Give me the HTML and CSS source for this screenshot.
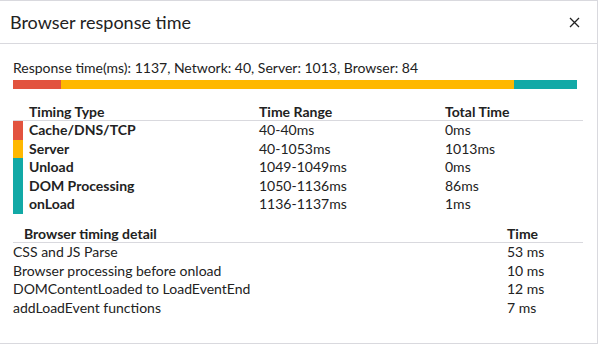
FILE: index.html
```html
<!DOCTYPE html>
<html>
<head>
<meta charset="utf-8">
<link rel="stylesheet" href="styles.css">
</head>
<body>
<div class="dialog">
  <div class="header">
    <div class="title">Browser response time</div>
    <button class="close" aria-label="Close">
      <svg width="11" height="11" viewBox="0 0 11 11"><path d="M1 1 L10 10 M10 1 L1 10" stroke="#222" stroke-width="1.3" fill="none"/></svg>
    </button>
  </div>
  <div class="body">
    <div class="summary">Response time(ms): 1137, Network: 40, Server: 1013, Browser: 84</div>
    <div class="bar">
      <div class="seg red" style="width:48px"></div>
      <div class="seg yellow" style="width:453px"></div>
      <div class="seg teal" style="width:63px"></div>
    </div>

    <div class="timing">
      <div class="trow thead">
        <div class="swatch"></div>
        <div class="c1">Timing Type</div>
        <div class="c2">Time Range</div>
        <div class="c3">Total Time</div>
      </div>
      <div class="trow">
        <div class="swatch red"></div>
        <div class="c1 b">Cache/DNS/TCP</div>
        <div class="c2">40-40ms</div>
        <div class="c3">0ms</div>
      </div>
      <div class="trow">
        <div class="swatch yellow"></div>
        <div class="c1 b">Server</div>
        <div class="c2">40-1053ms</div>
        <div class="c3">1013ms</div>
      </div>
      <div class="trow">
        <div class="swatch teal"></div>
        <div class="c1 b">Unload</div>
        <div class="c2">1049-1049ms</div>
        <div class="c3">0ms</div>
      </div>
      <div class="trow">
        <div class="swatch teal"></div>
        <div class="c1 b">DOM Processing</div>
        <div class="c2">1050-1136ms</div>
        <div class="c3">86ms</div>
      </div>
      <div class="trow">
        <div class="swatch teal"></div>
        <div class="c1 b">onLoad</div>
        <div class="c2">1136-1137ms</div>
        <div class="c3">1ms</div>
      </div>
    </div>

    <div class="detail">
      <div class="drow dhead">
        <div class="d1">Browser timing detail</div>
        <div class="d2">Time</div>
      </div>
      <div class="drow">
        <div class="d1">CSS and JS Parse</div>
        <div class="d2">53 ms</div>
      </div>
      <div class="drow">
        <div class="d1">Browser processing before onload</div>
        <div class="d2">10 ms</div>
      </div>
      <div class="drow">
        <div class="d1">DOMContentLoaded to LoadEventEnd</div>
        <div class="d2">12 ms</div>
      </div>
      <div class="drow">
        <div class="d1">addLoadEvent functions</div>
        <div class="d2">7 ms</div>
      </div>
    </div>
  </div>
</div>
</body>
</html>
```

FILE: styles.css
```css
html, body {
  margin: 0;
  padding: 0;
  background: #fff;
}
body {
  font-family: Lato, "Open Sans", sans-serif;
  color: #222;
  font-size: 14px;
}
.dialog {
  box-sizing: border-box;
  width: 598px;
  height: 344px;
  border-top: 1px solid #d9d9de;
  border-right: 1px solid #d9d9de;
  border-bottom: 1px solid #d9d9de;
  background: #fff;
}
.header {
  box-sizing: border-box;
  height: 43px;
  border-bottom: 1px solid #d9d9de;
  display: flex;
  align-items: center;
  justify-content: space-between;
  padding: 0 17px 0 10px;
}
.title {
  font-size: 18px;
  color: #222;
  padding-bottom: 1px;
}
.close {
  border: 0;
  background: none;
  padding: 0;
  width: 11px;
  height: 11px;
  display: flex;
}
.body {
  padding: 16px 14px 0 13px;
}
.summary {
  line-height: 16px;
  height: 16px;
}
.bar {
  display: flex;
  height: 9px;
  margin-top: 4px;
  width: 564px;
}
.seg { height: 100%; }
.red { background: #e2533f; }
.yellow { background: #ffb800; }
.teal { background: #12a9a6; }

.timing {
  margin-top: 14px;
  width: 570px;
}
.trow {
  display: grid;
  grid-template-columns: 10px 236px 186px 1fr;
  height: 18.6px;
  line-height: 18.6px;
}
.trow > div:not(.swatch) {
  padding-left: 6px;
}
.trow.thead {
  height: 17px;
  line-height: 17px;
  font-weight: 700;
  border-bottom: 1px solid #d9d9de;
}
.thead .c1 { padding-left: 7px; }
.b { font-weight: 700; }
.c2 { padding-left: 0 !important; }
.c3 { padding-left: 0 !important; }

.detail {
  margin-top: 11px;
  width: 570px;
}
.drow {
  display: grid;
  grid-template-columns: 494px 1fr;
  height: 18.6px;
  line-height: 18.6px;
}
.drow.dhead {
  height: 17px;
  line-height: 17px;
  font-weight: 700;
  border-bottom: 1px solid #d9d9de;
}
.dhead .d1 { padding-left: 11px; }
```
